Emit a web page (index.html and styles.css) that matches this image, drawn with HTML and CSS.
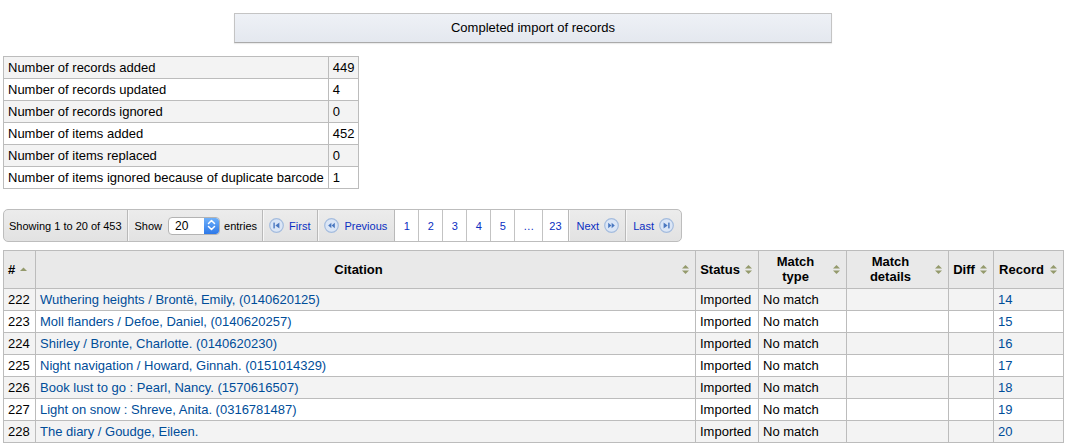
FILE: index.html
```html
<!DOCTYPE html>
<html>
<head>
<meta charset="utf-8">
<link rel="stylesheet" href="styles.css">
</head>
<body>
<div class="page">
  <div class="banner">Completed import of records</div>

  <table class="summary">
    <tbody>
      <tr><td>Number of records added</td><td>449</td></tr>
      <tr><td>Number of records updated</td><td>4</td></tr>
      <tr><td>Number of records ignored</td><td>0</td></tr>
      <tr><td>Number of items added</td><td>452</td></tr>
      <tr><td>Number of items replaced</td><td>0</td></tr>
      <tr><td>Number of items ignored because of duplicate barcode</td><td>1</td></tr>
    </tbody>
  </table>

  <div class="pager">
    <div class="seg info">Showing 1 to 20 of 453</div>
    <div class="seg length">
      <span>Show</span>
      <span class="select"><span class="select-val">20</span><span class="stepper"><svg width="15" height="18" viewBox="0 0 15 18"><path d="M4.5 7.5 L7.5 4.5 L10.5 7.5" fill="none" stroke="#fff" stroke-width="1.5" stroke-linecap="round" stroke-linejoin="round"/><path d="M4.5 10.5 L7.5 13.5 L10.5 10.5" fill="none" stroke="#fff" stroke-width="1.5" stroke-linecap="round" stroke-linejoin="round"/></svg></span></span>
      <span>entries</span>
    </div>
    <a class="seg nav" href="#"><svg class="nicon" width="15" height="15" viewBox="0 0 15 15"><circle cx="7.5" cy="7.5" r="6.8"/><rect x="4.4" y="4.6" width="1.4" height="5.8"/><path d="M10.4 4.6 L6.4 7.5 L10.4 10.4Z"/></svg><span>First</span></a>
    <a class="seg nav" href="#"><svg class="nicon" width="15" height="15" viewBox="0 0 15 15"><circle cx="7.5" cy="7.5" r="6.8"/><path d="M7.4 4.8 L4.2 7.5 L7.4 10.2Z"/><path d="M10.8 4.8 L7.6 7.5 L10.8 10.2Z"/></svg><span>Previous</span></a>
    <div class="pages">
      <a href="#" class="pg">1</a>
      <a href="#" class="pg">2</a>
      <a href="#" class="pg">3</a>
      <a href="#" class="pg">4</a>
      <a href="#" class="pg">5</a>
      <span class="pg ell">…</span>
      <a href="#" class="pg">23</a>
    </div>
    <a class="seg nav next" href="#"><span>Next</span><svg class="nicon" width="15" height="15" viewBox="0 0 15 15"><circle cx="7.5" cy="7.5" r="6.8"/><path d="M4.2 4.8 L7.4 7.5 L4.2 10.2Z"/><path d="M7.6 4.8 L10.8 7.5 L7.6 10.2Z"/></svg></a>
    <a class="seg nav last" href="#"><span>Last</span><svg class="nicon" width="15" height="15" viewBox="0 0 15 15"><circle cx="7.5" cy="7.5" r="6.8"/><path d="M4.6 4.6 L8.6 7.5 L4.6 10.4Z"/><rect x="9.2" y="4.6" width="1.4" height="5.8"/></svg></a>
  </div>

  <table class="records">
    <colgroup>
      <col class="c-num"><col class="c-cit"><col class="c-status"><col class="c-mtype"><col class="c-mdet"><col class="c-diff"><col class="c-rec">
    </colgroup>
    <thead>
      <tr>
        <th><div class="th first"><span>#</span><svg class="sort" width="9" height="11" viewBox="0 0 9 11"><path d="M1 7 L4.5 3.5 L8 7Z"/></svg></div></th>
        <th><div class="th"><span class="lbl">Citation</span><svg class="sort" width="9" height="11" viewBox="0 0 9 11"><path d="M1 4.5 L4.5 1 L8 4.5Z"/><path d="M1 6.5 L4.5 10 L8 6.5Z"/></svg></div></th>
        <th><div class="th"><span class="lbl">Status</span><svg class="sort" width="9" height="11" viewBox="0 0 9 11"><path d="M1 4.5 L4.5 1 L8 4.5Z"/><path d="M1 6.5 L4.5 10 L8 6.5Z"/></svg></div></th>
        <th><div class="th"><span class="lbl">Match<br>type</span><svg class="sort" width="9" height="11" viewBox="0 0 9 11"><path d="M1 4.5 L4.5 1 L8 4.5Z"/><path d="M1 6.5 L4.5 10 L8 6.5Z"/></svg></div></th>
        <th><div class="th"><span class="lbl">Match<br>details</span><svg class="sort" width="9" height="11" viewBox="0 0 9 11"><path d="M1 4.5 L4.5 1 L8 4.5Z"/><path d="M1 6.5 L4.5 10 L8 6.5Z"/></svg></div></th>
        <th><div class="th"><span class="lbl">Diff</span><svg class="sort" width="9" height="11" viewBox="0 0 9 11"><path d="M1 4.5 L4.5 1 L8 4.5Z"/><path d="M1 6.5 L4.5 10 L8 6.5Z"/></svg></div></th>
        <th><div class="th"><span class="lbl">Record</span><svg class="sort" width="9" height="11" viewBox="0 0 9 11"><path d="M1 4.5 L4.5 1 L8 4.5Z"/><path d="M1 6.5 L4.5 10 L8 6.5Z"/></svg></div></th>
      </tr>
    </thead>
    <tbody>
      <tr><td>222</td><td><a href="#">Wuthering heights / Brontë, Emily, (0140620125)</a></td><td>Imported</td><td>No match</td><td></td><td></td><td><a href="#">14</a></td></tr>
      <tr><td>223</td><td><a href="#">Moll flanders / Defoe, Daniel, (0140620257)</a></td><td>Imported</td><td>No match</td><td></td><td></td><td><a href="#">15</a></td></tr>
      <tr><td>224</td><td><a href="#">Shirley / Bronte, Charlotte. (0140620230)</a></td><td>Imported</td><td>No match</td><td></td><td></td><td><a href="#">16</a></td></tr>
      <tr><td>225</td><td><a href="#">Night navigation / Howard, Ginnah. (0151014329)</a></td><td>Imported</td><td>No match</td><td></td><td></td><td><a href="#">17</a></td></tr>
      <tr><td>226</td><td><a href="#">Book lust to go : Pearl, Nancy. (1570616507)</a></td><td>Imported</td><td>No match</td><td></td><td></td><td><a href="#">18</a></td></tr>
      <tr><td>227</td><td><a href="#">Light on snow : Shreve, Anita. (0316781487)</a></td><td>Imported</td><td>No match</td><td></td><td></td><td><a href="#">19</a></td></tr>
      <tr><td>228</td><td><a href="#">The diary / Goudge, Eileen.</a></td><td>Imported</td><td>No match</td><td></td><td></td><td><a href="#">20</a></td></tr>
    </tbody>
  </table>
</div>
</body>
</html>
```
FILE: styles.css
```css
html, body {
  margin: 0;
  padding: 0;
  background: #fff;
}
body {
  font-family: "Liberation Sans", Arial, sans-serif;
  font-size: 13px;
  color: #000;
}
.page {
  padding: 13px 6px 0 3px;
}
a {
  color: #004d99;
  text-decoration: none;
}

.banner {
  width: 598px;
  box-sizing: border-box;
  margin: 0 auto;
  padding: 6px 0 6px;
  line-height: 16px;
  text-align: center;
  background: linear-gradient(#eef1f6, #e4e8ef);
  border: 1px solid #c4c4c4;
  border-bottom-color: #aaa;
  box-shadow: 0 1px 1px rgba(0,0,0,0.08);
}

.summary {
  margin-top: 13px;
  border-collapse: collapse;
}
.summary td {
  border: 1px solid #bcbcbc;
  padding: 3px 4px 2px 4px;
  line-height: 16px;
}
.summary td + td {
  padding-right: 3px;
}
.summary tr:nth-child(odd) td {
  background: #f3f3f3;
}

.pager {
  margin-top: 20px;
  display: inline-flex;
  align-items: stretch;
  height: 33px;
  box-sizing: border-box;
  border: 1px solid #bdbdbd;
  border-radius: 5px;
  background: linear-gradient(#ececec, #e2e2e2);
  font-size: 11px;
  white-space: nowrap;
  overflow: hidden;
}
.seg {
  display: flex;
  align-items: center;
  border-right: 1px solid #b9b9b9;
  box-shadow: inset 1px 0 0 #f7f7f7;
}
.info {
  padding: 0 5px 0 5px;
  box-shadow: none;
}
.length {
  gap: 6px;
  padding: 0 5px 0 7px;
}
.length .select + span {
  margin-left: -2px;
}
.select {
  display: flex;
  align-items: stretch;
  width: 52px;
  height: 18px;
  box-sizing: border-box;
  border: 1px solid #b3b3b3;
  border-radius: 4px;
  background: #fff;
  overflow: hidden;
  font-size: 12px;
}
.select-val {
  flex: 1;
  padding-left: 6px;
  line-height: 16px;
}
.stepper {
  width: 15px;
  display: flex;
  align-items: center;
  justify-content: center;
  background: linear-gradient(#6fb0fa, #2d78e8);
  border-radius: 0 3px 3px 0;
}
.stepper svg { display: block; margin-top: -1px; }
.nav {
  color: #0a2fc2;
  gap: 5px;
  padding: 0 7px 0 6px;
}
.nav.next { padding: 0 6px 0 8px; }
.nav.last { padding: 0 7px 0 7px; border-right: none; }
.nicon { display: block; }
.nicon circle {
  fill: #dbe6f6;
  stroke: #a4bcde;
  stroke-width: 1.2;
}
.nicon path, .nicon rect {
  fill: #4a78c0;
}
.pages {
  display: flex;
  align-items: stretch;
  background: #fff;
  border-right: 1px solid #b9b9b9;
}
.pg {
  display: flex;
  align-items: center;
  justify-content: center;
  color: #0a2fc2;
  padding: 0 8px;
  border-right: 1px solid #c3c3c3;
  min-width: 7px;
}
.pg:last-child { border-right: none; padding: 0 6px; }
.pg.ell { color: #0a2fc2; padding: 0 8px; }

.records {
  margin-top: 8px;
  width: 1060px;
  table-layout: fixed;
  border-collapse: collapse;
}
.c-num { width: 32px; }
.c-cit { width: 660px; }
.c-status { width: 63px; }
.c-mtype { width: 88px; }
.c-mdet { width: 102px; }
.c-diff { width: 45px; }
.c-rec { width: 70px; }

.records th {
  background: #e9e9e9;
  border: 1px solid #bcbcbc;
  padding: 3px 5px 4px 4px;
  height: 30px;
  font-weight: bold;
  line-height: 15px;
}
.th {
  display: flex;
  align-items: center;
  gap: 4px;
}
.th .lbl {
  flex: 1;
  text-align: center;
}
.th.first {
  justify-content: flex-start;
  gap: 4px;
}
.sort { display: block; flex: none; }
.sort path { fill: #949a6c; }
.records td {
  border: 1px solid #bcbcbc;
  padding: 3px 4px 2px 4px;
  line-height: 16px;
  white-space: nowrap;
  overflow: hidden;
}
.records tbody tr:nth-child(odd) td {
  background: #f3f3f3;
}
```
